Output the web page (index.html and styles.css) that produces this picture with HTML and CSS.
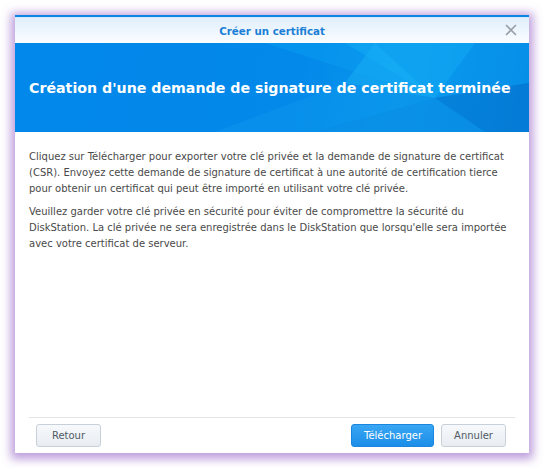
FILE: index.html
```html
<!DOCTYPE html>
<html lang="fr">
<head>
  <meta charset="UTF-8">
  <title>Créer un certificat</title>
  <link rel="stylesheet" href="styles.css">
</head>
<body>

  <div class="fenetre">
    <div class="titre">
      <span>Créer un certificat</span>
      <button class="fermer" type="button" aria-label="Fermer">
        <svg width="12" height="12" viewBox="0 0 12 12">
          <path d="M1 1 L11 11 M11 1 L1 11" stroke="#9a9fa6" stroke-width="1.6" fill="none"/>
        </svg>
      </button>
    </div>

    <div class="banniere">
      <svg class="motif" width="514" height="89" viewBox="0 0 514 89" preserveAspectRatio="none">
        <polygon points="250,0 514,0 514,40 420,55" fill="#0a9af0" opacity="0.55"/>
        <polygon points="330,0 460,0 420,55" fill="#12a8f4" opacity="0.6"/>
        <polygon points="420,55 514,40 514,89 470,89" fill="#0478d2" opacity="0.6"/>
        <polygon points="300,89 420,55 470,89" fill="#0a8ee6" opacity="0.7"/>
        <polygon points="200,89 330,40 420,55 300,89" fill="#0c96ec" opacity="0.5"/>
        <polygon points="360,0 420,55 330,40" fill="#18b0f6" opacity="0.5"/>
      </svg>
      <h1>Création d'une demande de signature de certificat terminée</h1>
    </div>

    <div class="contenu">
      <p>Cliquez sur Télécharger pour exporter votre clé privée et la demande de signature de certificat (CSR). Envoyez cette demande de signature de certificat à une autorité de certification tierce pour obtenir un certificat qui peut être importé en utilisant votre clé privée.</p>
      <p>Veuillez garder votre clé privée en sécurité pour éviter de compromettre la sécurité du DiskStation. La clé privée ne sera enregistrée dans le DiskStation que lorsqu'elle sera importée avec votre certificat de serveur.</p>
    </div>

    <div class="pied">
      <button class="bouton" type="button">Retour</button>
      <span class="espace"></span>
      <button class="bouton bleu" type="button">Télécharger</button>
      <button class="bouton" type="button">Annuler</button>
    </div>
  </div>

</body>
</html>
```

FILE: styles.css
```css
body {
  margin: 0;
  background-color: #fff;
  font-family: "DejaVu Sans", Verdana, sans-serif;
}
.fenetre {
  width: 514px;
  height: 438px;
  margin: 15px;
  background-color: #fff;
  border-top: 2px solid #0b86e3;
  box-sizing: border-box;
  display: flex;
  flex-direction: column;
  box-shadow: 0 2px 9px 4px rgba(178, 140, 214, 0.85);
}
.titre {
  height: 26px;
  display: flex;
  align-items: center;
  justify-content: center;
  position: relative;
  background: linear-gradient(#e0effc, #fbfdff);
  border-top: 1px solid #d4e9fb;
  box-sizing: border-box;
  color: #1b7fd6;
  font-weight: bold;
  font-size: 10.3px;
}
.fermer {
  position: absolute;
  right: 12px;
  top: 6px;
  border: none;
  background: none;
  padding: 0;
  width: 12px;
  height: 12px;
}
.fermer svg {
  display: block;
}
.banniere {
  height: 89px;
  position: relative;
  display: flex;
  align-items: center;
  padding: 0 14px;
  background: linear-gradient(100deg, #0287ea 0%, #0389ea 55%, #0a97ec 75%, #0580dc 100%);
  overflow: hidden;
}
.motif {
  position: absolute;
  left: 0;
  top: 0;
}
.banniere h1 {
  position: relative;
  margin: 0;
  color: #fff;
  font-size: 14.2px;
  font-weight: bold;
  white-space: nowrap;
}
.contenu {
  flex: 1;
  padding: 17px 14px 0 14px;
  color: #4a4a4a;
  font-size: 10px;
  line-height: 16px;
}
.contenu p {
  margin: 0 0 7px 0;
}
.pied {
  margin: 0 14px;
  padding: 6px 9px 6px 7px;
  border-top: 1px solid #e2e4e7;
  display: flex;
  gap: 7px;
}
.espace {
  flex: 1;
}
.bouton {
  height: 23px;
  min-width: 65px;
  padding: 0 12px;
  border: 1px solid #c7d0d9;
  border-radius: 3px;
  background: linear-gradient(#f7f9fb, #e8edf2);
  color: #505a64;
  font-family: "DejaVu Sans", Verdana, sans-serif;
  font-size: 10px;
}
.bouton.bleu {
  width: 83px;
  border-color: #1b86e0;
  background: linear-gradient(#3aa6f4, #1b8ee8);
  color: #fff;
}
```
